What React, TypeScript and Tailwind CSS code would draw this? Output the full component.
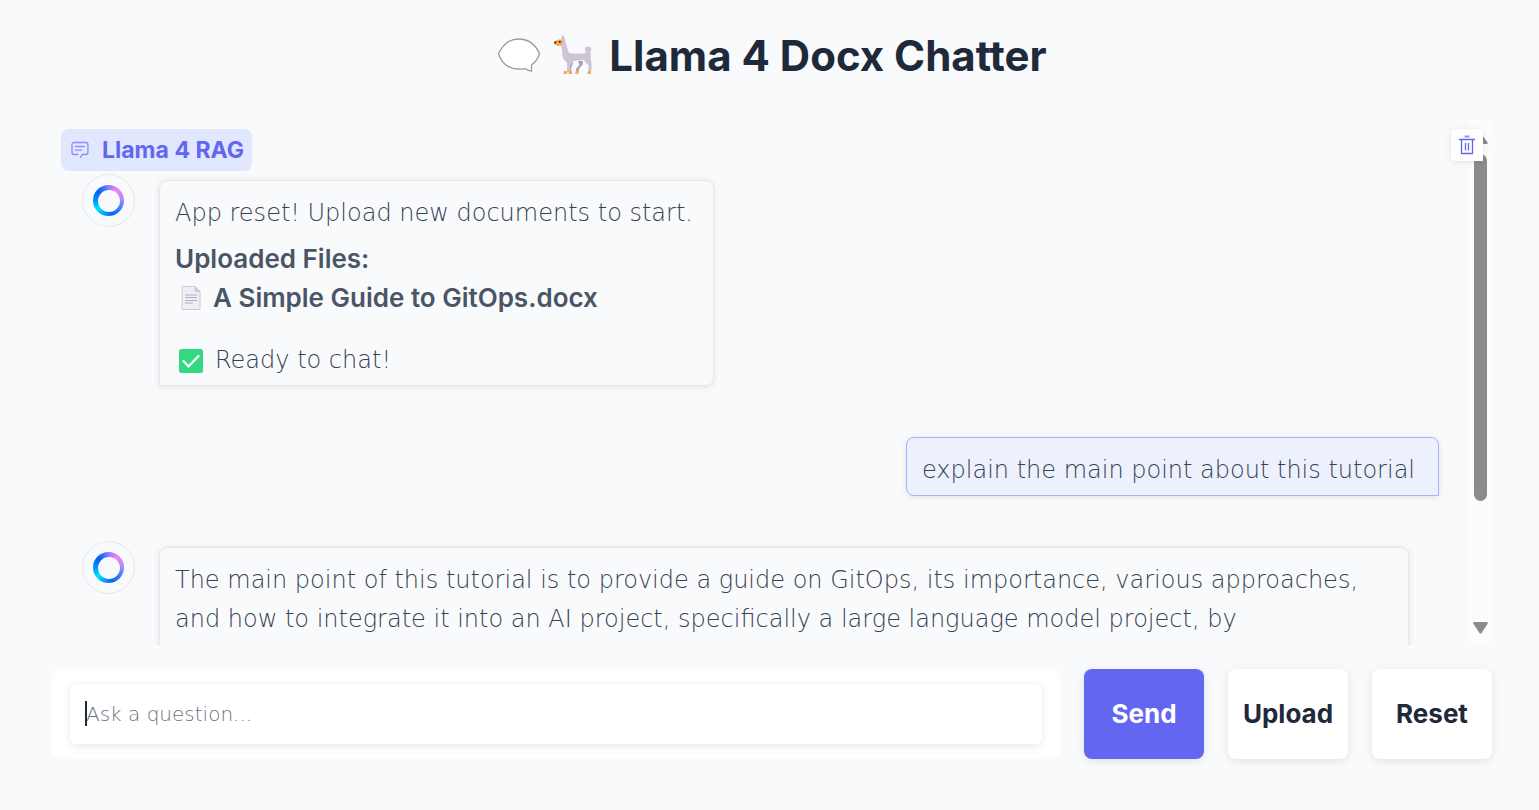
import type { ReactNode } from "react";

const CommentIcon = () => (
  <svg width="18" height="18" viewBox="0 0 18 18" fill="none" stroke="#8b8df5" strokeWidth="1.3" strokeLinecap="round" strokeLinejoin="round">
    <path d="M9.5 16.3l1.800-2.800h3.600a2 2 0 0 0 2-2v-8a2 2 0 0 0-2-2H3a2 2 0 0 0-2 2v8a2 2 0 0 0 2 2h4" />
    <path d="M4.500 5.500h9M4.500 9.200h6" />
  </svg>
);

const TrashIcon = () => (
  <svg width="16" height="20" viewBox="0 0 16 20" fill="none" stroke="#6366f1" strokeWidth="1.3">
    <path d="M5.500 1.500h5" strokeWidth="2" stroke="#8f91f5" />
    <path d="M0 4.500h16M2.500 4.500v14h11v-14M6.500 8v7.500M9.500 8v7.500" />
  </svg>
);

const SpeechIcon = () => (
  <svg width="44" height="40" viewBox="0 0 44 40" fill="#fff" stroke="#9b9b9b" strokeWidth="1.3" strokeLinejoin="round">
    <path d="M22 3C12 3 6.500 8 1.500 17.500C4 26 11 33 21 33C25 33.500 27 32 29 33C30.500 34.500 32.500 35 34.500 35.200V29C38 26.500 41 23 42.500 17.500C38 8 32 3 22 3Z" />
  </svg>
);

const LlamaIcon = () => (
  <svg width="40" height="42" viewBox="0 0 40 42">
    <path fill="#a99fb5" d="M16 27h4l-.5 4-1.500 3 .5 4h-3l-.5-5zM25 27h5l-.5 4-3 3-1 4h-3l1-4 3-3z" />
    <path fill="#cdc4d6" d="M9 1c1.500 0 3.200 3 3.500 7l3 10c1 1 2 1.500 4 1.500h9c2 0 4-.5 5-1.500-2.500-1-2-5.500 1.500-5.500 3.500 0 4.500 4 2 5.500 1 2 1 4 .8 7l.7 4v8h-3v-6l-5-5-10 1-3 4-.5 7h-3l.2-9c-3-2-4.700-5-5-9L8.500 12 5 10l3-4z" />
    <path fill="#f9a94c" d="M1 8.500C3 5.500 8 4.500 9.500 7c1 3-2 5.500-5 5C3 11.500 1.500 10.500 1 8.500z" />
    <path fill="#402a32" d="M1 8l2.500-1-.5 2.500H1.300z" />
    <circle cx="6.800" cy="7.800" r="1.100" fill="#402a32" />
    <path fill="#f9a94c" d="M11 37h3.200l-.2 3h-3.500zM15.500 37h3l.7 3h-3.500zM23 37h3l-.5 3H22zM35 37h3v3h-3.500z" />
  </svg>
);

const FileIcon = () => (
  <svg width="20" height="26" viewBox="0 0 20 26">
    <path fill="#f1edf5" stroke="#d3cadb" d="M1 1.500h13l5 5V24.500H1z" />
    <path fill="#cdc4d6" d="M13.500 1l6 6h-4.500l-1.500-1.500z" />
    <path stroke="#b5abc3" d="M4 10h12M4 12.500h12M4 15.500h12M4 18h8" />
  </svg>
);

const CheckIcon = () => (
  <svg width="24" height="24" viewBox="0 0 24 24" fill="none">
    <rect width="24" height="24" rx="2.500" fill="#33d883" />
    <path d="M4.500 12l5 5.500L19.500 7" stroke="#fff" strokeWidth="2.200" strokeLinecap="round" strokeLinejoin="round" />
  </svg>
);

const Avatar = () => (
  <div className="flex size-[53px] shrink-0 items-center justify-center rounded-full border border-gray-200">
    <div className="flex size-[31px] items-center justify-center rounded-full bg-[conic-gradient(from_0deg,#8f7cff,#f582fa_40deg,#a78bff_85deg,#3d7dff_125deg,#0668f5_165deg,#00a5ff_200deg,#00e5ff_230deg,#0090ff_270deg,#0062f5_310deg,#3a72ff_340deg,#8f7cff)]">
      <div className="size-[22px] rounded-full bg-[#f9fafc]" />
    </div>
  </div>
);

const BotMessage = ({ children }: { children: ReactNode }) => (
  <div className="flex items-start gap-6 pl-[30px] pr-[60px]">
    <Avatar />
    <div className="mt-[6px] min-w-[555px] rounded-lg rounded-bl-none border border-gray-200 px-[15px] pt-[13px] pb-[5px] shadow-[0_1px_6px_rgba(0,0,0,0.1)]">
      {children}
    </div>
  </div>
);

export default function App() {
  return (
    <div className="flex h-dvh flex-col bg-[#f9fafc] pr-[47px] pb-[51px] pl-[52px] font-['Inter',sans-serif]">
      <header className="flex h-[120px] shrink-0 items-start justify-center pt-[34px]">
        <span className="pt-[2px]">
          <SpeechIcon />
        </span>
        <span className="ml-3">
          <LlamaIcon />
        </span>
        <h1 className="ml-4 text-[42px] leading-[44px] font-bold text-gray-800">Llama 4 Docx Chatter</h1>
      </header>

      <main className="relative flex min-h-0 flex-1">
        <section className="flex min-w-0 flex-1 flex-col overflow-hidden pt-[9px] font-['DejaVu_Sans','Inter',sans-serif] text-[24px] leading-[39px] font-extralight text-gray-700">
          <div className="ml-[9px] flex h-[42px] shrink-0 items-center gap-[13px] self-start rounded-lg bg-indigo-100 pr-2 pl-[10px] font-['Inter',sans-serif] text-[23px] font-bold text-[#6366f1]">
            <CommentIcon />
            Llama 4 RAG
          </div>
          <div className="mt-[3px] flex flex-col">
            <BotMessage>
              <p>App reset! Upload new documents to start.</p>
              <p className="mt-[6px] font-['Inter',sans-serif] text-[26px] font-semibold text-gray-600">Uploaded Files:</p>
              <p className="flex items-center gap-3 pl-[6px] font-['Inter',sans-serif] text-[26px] font-semibold text-gray-600">
                <FileIcon />
                A Simple Guide to GitOps.docx
              </p>
              <p className="mt-6 flex items-center gap-3 pl-1">
                <CheckIcon />
                Ready to chat!
              </p>
            </BotMessage>
            <div className="mt-[51px] mr-[30px] min-w-[533px] self-end rounded-lg rounded-br-none border border-indigo-300 bg-[#edf1fe] px-[15px] pt-[13px] pb-[5px] shadow-[0_1px_6px_rgba(0,0,0,0.1)]">
              <p>explain the main point about this tutorial</p>
            </div>
            <div className="mt-[45px]">
              <BotMessage>
                <p className="pb-6">
                  The main point of this tutorial is to provide a guide on GitOps, its importance, various approaches,
                  and how to integrate it into an AI project, specifically a large language model project, by
                </p>
              </BotMessage>
            </div>
          </div>
        </section>
        <div className="flex w-[23px] shrink-0 flex-col items-center bg-[#fcfcfd] pt-[14px] pb-[11px]">
          <svg width="14" height="10" viewBox="0 0 14 10" fill="#8b8b8b">
            <path d="M6.200 0.500L0.300 8.500Q0 10 1.500 10h11Q14 10 13.700 8.500L7.800 0.500Q7 -0.300 6.200 0.500z" />
          </svg>
          <div className="mt-[10px] h-[347px] w-[13px] rounded-full bg-[#8b8b8b]" />
          <svg className="mt-auto" width="15" height="12" viewBox="0 0 15 12" fill="#8b8b8b">
            <path d="M1.300 0h12.400Q15.400 0.500 14.500 2L8.500 11Q7.500 12.300 6.500 11L0.500 2Q-0.400 0.500 1.300 0z" />
          </svg>
        </div>
        <button aria-label="Clear chat" className="absolute top-[9px] right-[9px] flex h-8 w-8 items-center justify-center rounded-l bg-white shadow-[0_1px_6px_rgba(0,0,0,0.1)]">
          <TrashIcon />
        </button>
      </main>

      <form className="mt-6 flex h-[90px] shrink-0 gap-6 text-[26px] font-bold text-gray-800">
        <div className="relative min-w-0 flex-1 rounded-lg bg-white px-[18px] py-[15px]">
          <input
            aria-label="Ask a question"
            placeholder="Ask a question..."
            className="h-full w-full rounded-md bg-white px-4 font-['DejaVu_Sans','Inter',sans-serif] text-[20px] font-extralight shadow-[0_2px_8px_rgba(0,0,0,0.1)] outline-none placeholder:text-gray-500"
          />
          <span className="absolute top-8 left-[33px] h-[25px] w-[2px] bg-gray-800" />
        </div>
        <button type="button" className="w-[120px] rounded-lg bg-[#6366f1] pb-[2px] text-white shadow-[0_2px_8px_rgba(0,0,0,0.1)]">Send</button>
        <button type="button" className="w-[120px] rounded-lg bg-white pb-[2px] shadow-[0_2px_8px_rgba(0,0,0,0.1)]">Upload</button>
        <button type="button" className="w-[120px] rounded-lg bg-white pb-[2px] shadow-[0_2px_8px_rgba(0,0,0,0.1)]">Reset</button>
      </form>
    </div>
  );
}
